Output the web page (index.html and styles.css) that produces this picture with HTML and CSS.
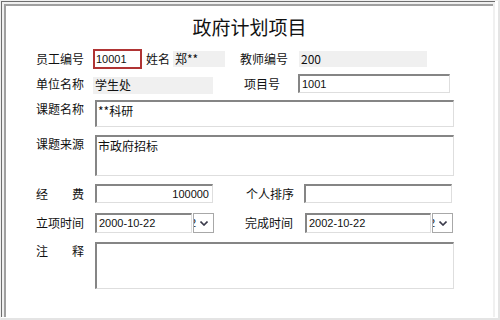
FILE: index.html
```html
<html lang="zh-CN">
<head>
  <meta charset="UTF-8">
  <title>政府计划项目</title>
  <link rel="stylesheet" href="styles.css">
</head>
<body>
  <div class="frame">
    <div class="outer">
      <div class="panel">
        <h1>政府计划项目</h1>

        <div class="row row-1">
          <span class="label w57">员工编号</span>
          <div class="box focused w49">10001</div>
          <span class="label name-label">姓名</span>
          <span class="readonly w52">郑**</span>
          <span class="label teacher-label">教师编号</span>
          <span class="readonly w128">200</span>
        </div>

        <div class="row row-2">
          <span class="label w57">单位名称</span>
          <span class="readonly w120">学生处</span>
          <span class="label project-label">项目号</span>
          <div class="box sunken w152">1001</div>
        </div>

        <div class="row row-3 top">
          <span class="label w59">课题名称</span>
          <div class="box sunken area w359 h27">**科研</div>
        </div>

        <div class="row row-4 top">
          <span class="label w59">课题来源</span>
          <div class="box sunken area w359 h41">市政府招标</div>
        </div>

        <div class="row row-5">
          <span class="label spread w59"><span>经</span><span>费</span></span>
          <div class="box sunken num w118">100000</div>
          <span class="label rank-label">个人排序</span>
          <div class="box sunken w148"></div>
        </div>

        <div class="row row-6">
          <span class="label w59">立项时间</span>
          <div class="box sunken date w97">2000-10-22</div>
          <div class="drop"><span class="clip">2</span><svg width="8" height="5" viewBox="0 0 8 5"><path d="M0.5 0.5 L4 4 L7.5 0.5" fill="none" stroke="#3a3a4a" stroke-width="1.6"/></svg></div>
          <span class="label finish-label">完成时间</span>
          <div class="box sunken date w126">2002-10-22</div>
          <div class="drop"><span class="clip">2</span><svg width="8" height="5" viewBox="0 0 8 5"><path d="M0.5 0.5 L4 4 L7.5 0.5" fill="none" stroke="#3a3a4a" stroke-width="1.6"/></svg></div>
        </div>

        <div class="row row-7 top">
          <span class="label spread w59"><span>注</span><span>释</span></span>
          <div class="box sunken area w359 h47"></div>
        </div>
      </div>
    </div>
  </div>
</body>
</html>
```

FILE: styles.css
```css
/* window frame */
body {
  margin: 0;
  background-color: #fff;
  font-family: "Noto Sans CJK SC", "Liberation Sans", sans-serif;
  font-size: 12px;
  color: #111;
}

.frame {
  box-sizing: border-box;
  width: 500px;
  height: 320px;
  border-left: 1px solid #f0f0f0;
  border-top: 1px solid #f0f0f0;
  border-right: 2px solid #e4e4e4;
  border-bottom: 2px solid #e4e4e4;
  padding: 0 3px 1px 0;
  background-color: #fff;
}

.outer {
  box-sizing: border-box;
  height: 100%;
  border-left: 1px solid #6e6e6e;
  border-top: 1px solid #6e6e6e;
  padding: 2px 2px 0 2px;
  background-color: #f0f0f0;
}

.panel {
  box-sizing: border-box;
  height: 100%;
  border-left: 2px solid #a0a0a0;
  border-top: 2px solid #a0a0a0;
  background-color: #fff;
  padding: 11px 0 0 30px;
}

h1 {
  margin: 0 0 0 -30px;
  font-size: 19px;
  line-height: 20px;
  font-weight: normal;
  text-align: center;
  color: #111;
}

/* rows */
.row {
  display: flex;
  align-items: center;
}

.row.top {
  align-items: flex-start;
}

.row-1 { margin-top: 12px; height: 20px; }
.row-2 { margin-top: 4px; height: 21px; }
.row-3 { margin-top: 6px; }
.row-4 { margin-top: 8px; }
.row-5 { margin-top: 8px; }
.row-6 { margin-top: 10px; }
.row-7 { margin-top: 9px; }

.label {
  white-space: nowrap;
  line-height: 16px;
  flex-shrink: 0;
}

.row.top .label {
  margin-top: 1px;
}

.spread {
  display: flex;
  justify-content: space-between;
  padding-right: 11px;
  box-sizing: border-box;
}

.name-label { margin-left: 4px; width: 27px; }
.teacher-label { margin-left: 15px; width: 59px; }
.project-label { margin-left: 31px; width: 54px; }
.rank-label { margin-left: 33px; width: 58px; }
.finish-label { margin-left: 31px; width: 60px; }

/* fields */
.readonly {
  box-sizing: border-box;
  height: 16px;
  line-height: 16px;
  padding-left: 2px;
  background-color: #f0f0f0;
  flex-shrink: 0;
}

.row-2 .readonly { height: 17px; margin-top: 4px; }

.box {
  box-sizing: border-box;
  flex-shrink: 0;
  height: 19px;
  padding: 0 2px;
  background-color: #fff;
  font-family: "Liberation Sans", "Noto Sans CJK SC", sans-serif;
  font-size: 11px;
  line-height: 16px;
  white-space: nowrap;
  overflow: hidden;
}

.focused {
  height: 20px;
  border: 2px solid #b03434;
  padding-left: 1px;
}

.sunken {
  border-top: 2px solid #858585;
  border-left: 2px solid #858585;
  border-right: 1px solid #dedede;
  border-bottom: 1px solid #dedede;
}

.area {
  font-family: "Noto Sans CJK SC", "Liberation Sans", sans-serif;
  font-size: 12px;
  line-height: 17px;
  padding-left: 1px;
}

.num {
  text-align: right;
  padding-right: 3px;
}

.date {
  height: 20px;
  line-height: 17px;
}

.drop {
  box-sizing: border-box;
  display: flex;
  align-items: center;
  width: 21px;
  height: 20px;
  margin-left: 1px;
  border: 1px solid #a8a8a8;
  background-color: #fff;
  overflow: hidden;
  flex-shrink: 0;
}

.drop .clip {
  font-family: "Liberation Sans", sans-serif;
  font-size: 11px;
  margin-left: -4px;
  width: 6px;
  color: #222;
}

.drop svg {
  margin-left: 4px;
}

/* sizes */
.w49 { width: 49px; }
.w52 { width: 52px; }
.w57 { width: 57px; }
.w59 { width: 59px; }
.w97 { width: 97px; }
.w118 { width: 118px; }
.w120 { width: 120px; }
.w126 { width: 126px; }
.w128 { width: 128px; }
.w148 { width: 148px; }
.w152 { width: 152px; }
.w359 { width: 359px; }
.h27 { height: 27px; }
.h41 { height: 41px; }
.h47 { height: 47px; }
```
